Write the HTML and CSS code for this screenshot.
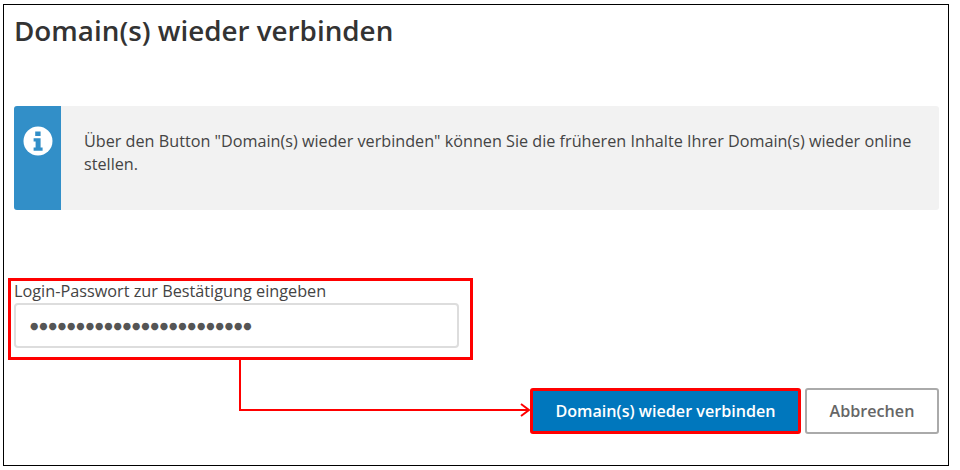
FILE: index.html
```html
<!DOCTYPE html>
<html lang="de">
<head>
<meta charset="utf-8">
<title>Domain(s) wieder verbinden</title>
<link rel="stylesheet" href="styles.css">
</head>
<body>
<div class="frame">
  <h1 class="title">Domain(s) wieder verbinden</h1>
  <div class="notice">
    <div class="notice-side">
      <svg class="info-icon" width="30" height="30" viewBox="0 0 30 30">
        <circle cx="15" cy="15" r="14.5" fill="#fff"/>
        <path fill="#328fc8" d="M12.2 5.6h5.4v4.4h-5.4zM10.6 12.2h7v9.4h2v3.2h-9v-3.2h2v-6.2h-2z"/>
      </svg>
    </div>
    <p class="notice-text">Über den Button "Domain(s) wieder verbinden" können Sie die früheren Inhalte Ihrer Domain(s) wieder online stellen.</p>
  </div>
  <div class="field">
    <label class="field-label" for="pw">Login-Passwort zur Bestätigung eingeben</label>
    <div class="field-input" id="pw">●●●●●●●●●●●●●●●●●●●●●●●●</div>
  </div>
  <div class="actions">
    <button class="btn btn-primary" type="button">Domain(s) wieder verbinden</button>
    <button class="btn btn-secondary" type="button">Abbrechen</button>
  </div>
  <svg class="connector" width="300" height="60" viewBox="0 0 300 60">
    <path d="M1 0V50H290M282 44l8 6l-8 6" fill="none" stroke="#f00" stroke-width="2"/>
  </svg>
</div>
</body>
</html>
```

FILE: styles.css
```css
* { box-sizing: border-box; }
html, body { margin: 0; padding: 0; background: #fff; }
body { width: 960px; height: 470px; overflow: hidden; font-family: "Open Sans", sans-serif; color: #444; }
.frame {
  position: relative;
  width: 946px;
  height: 462px;
  margin: 4px 0 0 3px;
  border: 1px solid #000;
  padding: 0 9px 0 10px;
}
.title {
  margin: 0;
  padding-top: 7px;
  height: 101px;
  font-size: 27.8px;
  line-height: 36px;
  font-weight: 600;
  color: #333;
}
.notice {
  display: flex;
  height: 104px;
  background: #f2f2f2;
  border-radius: 3px;
  overflow: hidden;
}
.notice-side {
  flex: 0 0 46.5px;
  background: #328fc8;
  padding: 20px 0 0 9px;
}
.info-icon { display: block; }
.notice-text {
  margin: 0;
  padding: 24px 20px 0 23.5px;
  font-size: 16.2px;
  line-height: 23px;
}
.field {
  width: 465px;
  height: 82px;
  margin: 68px 0 0 -6px;
  border: 3px solid #f00;
  padding: 0 0 0 3px;
  background: #fff;
}
.field-label {
  display: block;
  font-size: 16.25px;
  line-height: 20px;
}
.field-input {
  width: 445px;
  height: 45px;
  margin-top: 2px;
  border: 2px solid #ddd;
  border-radius: 4px;
  padding: 0 0 0 14px;
  font-size: 9.6px;
  line-height: 41px;
  color: #555;
  font-family: "DejaVu Sans", sans-serif;
  letter-spacing: 0.9px;
}
.actions {
  display: flex;
  justify-content: flex-end;
  gap: 4px;
  margin-top: 28px;
}
.btn {
  height: 46px;
  margin: 0;
  border-radius: 3px;
  font-family: "Open Sans", sans-serif;
  font-size: 16.15px;
  font-weight: 600;
}
.btn-primary {
  width: 271px;
  background: #0077bd;
  color: #fff;
  border: 3px solid #f00;
}
.btn-secondary {
  width: 134px;
  background: #fff;
  color: #666;
  border: 2px solid #aaa;
}
.connector {
  position: absolute;
  left: 235px;
  top: 355px;
}
```
